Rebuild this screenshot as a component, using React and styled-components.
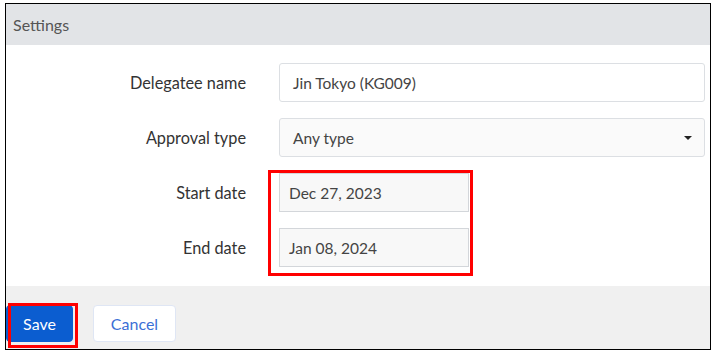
import React from "react";
import styled, { createGlobalStyle } from "styled-components";

const Global = createGlobalStyle`
  html, body { margin: 0; padding: 0; background: #fff; }
  body { font-family: "Lato", "Open Sans", sans-serif; }
`;

const Page = styled.div`
  padding: 3px 6px 0 5px;
  width: 716px;
  box-sizing: border-box;
`;

const Panel = styled.div`
  position: relative;
  border: 1px solid #000;
  width: 706px;
  box-sizing: border-box;
  display: flex;
  flex-direction: column;
`;

const Header = styled.div`
  height: 41px;
  background: #e2e4e7;
  display: flex;
  align-items: center;
  padding-left: 7px;
  font-size: 16px;
  color: #555;
`;

const Body = styled.div`
  background: #fff;
  padding: 18px 0 19px;
  display: flex;
  flex-direction: column;
  gap: 16px;
`;

const Row = styled.div`
  display: grid;
  grid-template-columns: 240px 1fr;
  column-gap: 33px;
  align-items: center;
  padding-right: 5px;
`;

const Label = styled.label`
  text-align: right;
  font-size: 16.3px;
  color: #333;
`;

const Field = styled.div`
  height: 39px;
  box-sizing: border-box;
  width: ${(p) => (p.$narrow ? "190px" : "426px")};
  border: 1px solid ${(p) => (p.$muted ? "#d3d6da" : "#dcdfe3")};
  border-radius: ${(p) => (p.$muted ? "0" : "3px")};
  background: ${(p) => p.$bg || "#fff"};
  display: flex;
  align-items: center;
  justify-content: space-between;
  padding: 0 12px 0 ${(p) => (p.$narrow ? "9px" : "13px")};
  font-size: 15.5px;
  color: #444;
`;

const Caret = styled.span`
  width: 0;
  height: 0;
  border-left: 4px solid transparent;
  border-right: 4px solid transparent;
  border-top: 4px solid #222;
`;

const Footer = styled.div`
  background: #f0f0f0;
  height: 63px;
  display: flex;
  align-items: flex-end;
  gap: 20px;
  padding: 0 0 7px 0;
  box-sizing: border-box;
`;

const Button = styled.button`
  height: 37px;
  box-sizing: border-box;
  border-radius: 4px;
  font-family: inherit;
  font-size: 16px;
  padding: 0;
  width: ${(p) => (p.$primary ? "67px" : "83px")};
  background: ${(p) => (p.$primary ? "#0b5dd0" : "#fff")};
  color: ${(p) => (p.$primary ? "#fff" : "#3b6fd6")};
  border: 1px solid ${(p) => (p.$primary ? "#0b5dd0" : "#dfe6f4")};
`;

const Highlight = styled.div`
  position: absolute;
  border: 3px solid #f00;
  box-sizing: border-box;
  pointer-events: none;
`;

export default function App() {
  return (
    <>
      <Global />
      <Page>
        <Panel>
          <Header>Settings</Header>
          <Body>
            <Row>
              <Label>Delegatee name</Label>
              <Field>Jin Tokyo (KG009)</Field>
            </Row>
            <Row>
              <Label>Approval type</Label>
              <Field $bg="#fafafa">
                Any type
                <Caret />
              </Field>
            </Row>
            <Row>
              <Label>Start date</Label>
              <Field $narrow $muted $bg="#f8f8f8">Dec 27, 2023</Field>
            </Row>
            <Row>
              <Label>End date</Label>
              <Field $narrow $muted $bg="#f8f8f8">Jan 08, 2024</Field>
            </Row>
          </Body>
          <Footer>
            <Button $primary>Save</Button>
            <Button>Cancel</Button>
          </Footer>
          <Highlight style={{ left: 2, top: 299, width: 70, height: 45 }} />
          <Highlight style={{ left: 262, top: 166, width: 205, height: 106 }} />
        </Panel>
      </Page>
    </>
  );
}
